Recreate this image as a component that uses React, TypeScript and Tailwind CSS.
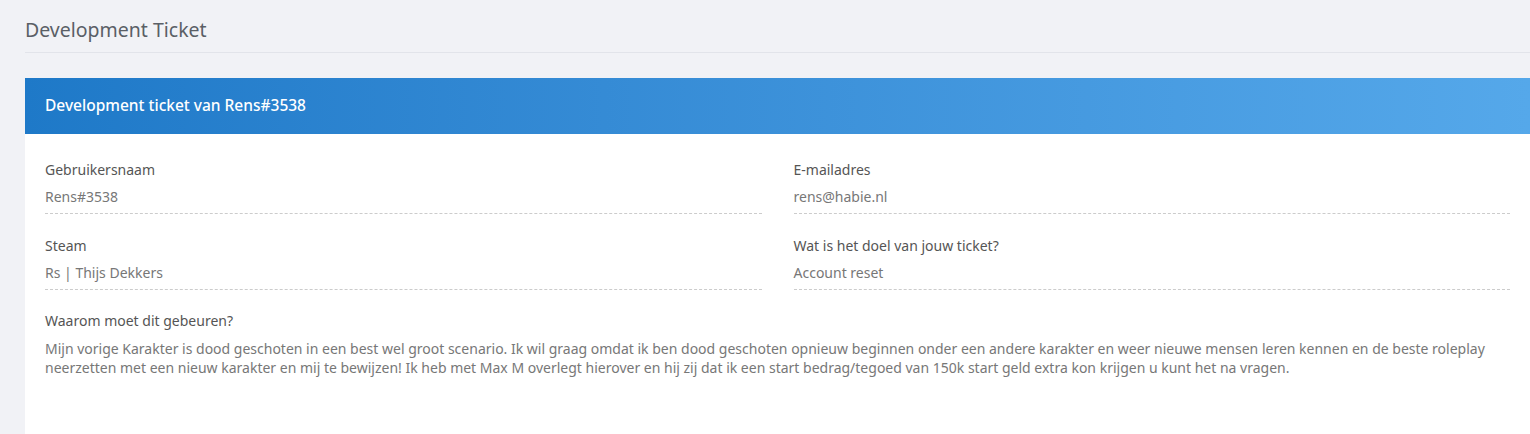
const fields = [
  { label: "Gebruikersnaam", value: "Rens#3538" },
  { label: "E-mailadres", value: "rens@habie.nl" },
  { label: "Steam", value: "Rs | Thijs Dekkers" },
  { label: "Wat is het doel van jouw ticket?", value: "Account reset" },
];

const reason =
  "Mijn vorige Karakter is dood geschoten in een best wel groot scenario. Ik wil graag omdat ik ben dood geschoten opnieuw beginnen onder een andere karakter en weer nieuwe mensen leren kennen en de beste roleplay neerzetten met een nieuw karakter en mij te bewijzen! Ik heb met Max M overlegt hierover en hij zij dat ik een start bedrag/tegoed van 150k start geld extra kon krijgen u kunt het na vragen.";

const Field = ({ label, value }: { label: string; value: string }) => (
  <div className="mb-[22px]">
    <div className="text-[14px] leading-5 text-[#555] mb-[7px]">{label}</div>
    <div className="text-[14px] leading-5 text-[#777] pb-[6px] border-b border-dashed border-[#ccc]">{value}</div>
  </div>
);

export default function App() {
  return (
    <div
      className="h-[434px] bg-[#f1f2f6] pl-[25px] overflow-hidden flex flex-col"
      style={{ fontFamily: "'Noto Sans', Lato, sans-serif" }}
    >
      <div className="pt-[18px] pb-[10px] border-b border-[#e2e4ea]">
        <h1 className="text-[19.5px] leading-6 text-[#5a5f66]">Development Ticket</h1>
      </div>

      <div className="mt-[25px] bg-white flex-1">
        <div className="h-[56px] flex items-center px-5 bg-gradient-to-r from-[#1e79c8] to-[#55a8ea]">
          <h2 className="text-[15.5px] font-medium text-white">Development ticket van Rens#3538</h2>
        </div>
        <div className="pt-[26px] px-5 pb-[40px]">
          <div className="grid grid-cols-2 gap-x-8">
            {fields.map((f) => (
              <Field key={f.label} label={f.label} value={f.value} />
            ))}
          </div>
          <div className="text-[14px] leading-5 text-[#555] -mt-[1px] mb-[8px]">Waarom moet dit gebeuren?</div>
          <p className="text-[14px] leading-[19px] text-[#777]">{reason}</p>
        </div>
      </div>
    </div>
  );
}
